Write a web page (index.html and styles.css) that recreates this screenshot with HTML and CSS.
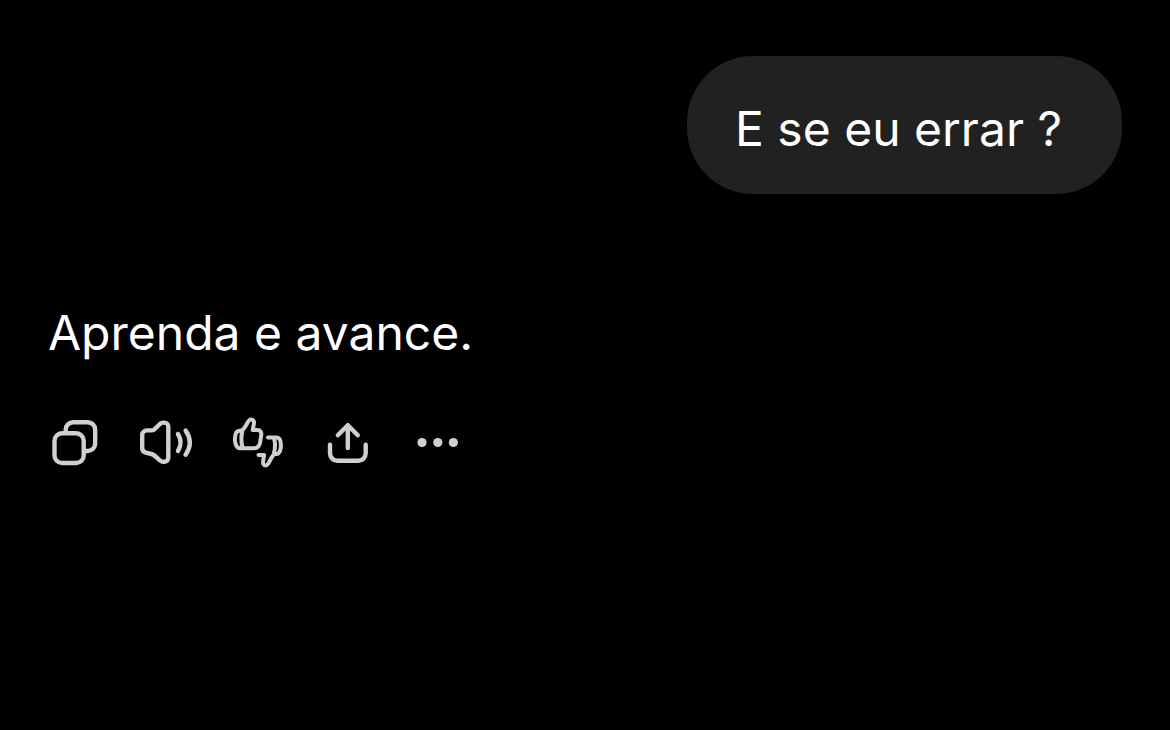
FILE: index.html
```html
<!DOCTYPE html>
<html lang="pt-BR">
<head>
<meta charset="utf-8">
<meta name="viewport" content="width=device-width, initial-scale=1">
<title>Conversa</title>
<link rel="stylesheet" href="styles.css">
</head>
<body>
<main class="chat">
  <p class="bubble">E se eu errar ?</p>
  <article class="reply">
    <p class="reply-text">Aprenda e avance.</p>
    <div class="actions">
      <button class="action" type="button" aria-label="Copiar">
        <svg class="icon" viewBox="0 0 70 70"><rect x="14.5" y="28.3" width="29.2" height="29.7" rx="7.5"/><path d="M25.7 27v-2.3a7.5 7.5 0 0 1 7.5-7.5h14.5a7.5 7.5 0 0 1 7.5 7.5v13.8a7.5 7.5 0 0 1-7.5 7.5h-2.5"/></svg>
      </button>
      <button class="action" type="button" aria-label="Ouvir">
        <svg class="icon" viewBox="0 0 70 70"><path d="M11.2 30.2a4.8 4.8 0 0 1 4.8-4.8h4.5q1.8 0 3-1.2l5.4-5.2c1.1-1 2.3-1.4 3.3-1.4h1.1a4 4 0 0 1 4 4v31.2a4 4 0 0 1-4 4h-.8c-1.4 0-2.5-.5-3.6-1.4l-5.5-4.9q-1.3-1.1-3-1.5l-5.6-1.4A4.7 4.7 0 0 1 11.2 43z"/><path d="M47 29c3.3 5.5 3.3 11.5 0 17M54.6 25.5c5.6 8 5.6 16.2 0 24.2"/></svg>
      </button>
      <button class="action" type="button" aria-label="Avaliar">
        <svg class="icon icon-fine" viewBox="0 0 70 70"><path d="M18.5 25.6c3 0 4.9-4.1 6.8-7.6 1.1-2.2 1.9-3.6 3.5-3.6 2.9 0 3.5 2.1 3.1 4.2L30.7 25h4.4c3.5 0 4.7 2.4 4.1 5.5l-1.1 7c-.7 4-2.6 5.7-6.2 5.7H17.8c-3.1 0-4.9-4.4-4.9-9.2 0-4.8 1.8-8.4 5.6-8.4zM20.3 26c-1.3 5.6-1.3 11 .2 16.5"/><path d="M46 32.5h8.7c2.8 0 4.2 3.5 4.2 8 0 4.6-1.5 8.4-4.2 8.4h-1.3c-1.9 0-2.7 1.6-4 4l-2.2 4.1c-.8 1.5-1.8 3.5-3.5 3.5-2.3 0-2.9-2.3-2.6-4.1l1-6.5H36.5M52 33.2c1.4 4.7 1.4 9.6 0 14.7"/></svg>
      </button>
      <button class="action" type="button" aria-label="Compartilhar">
        <svg class="icon" viewBox="0 0 70 70"><path d="M34.8 43V20.5M24.8 30.2l10-10 10 10M17 39.8v8.5a7.5 7.5 0 0 0 7.5 7.5h20.7a7.5 7.5 0 0 0 7.5-7.5v-8.5"/></svg>
      </button>
      <button class="action" type="button" aria-label="Mais opções">
        <svg class="icon icon-dots" viewBox="0 0 70 70"><circle cx="18" cy="37.5" r="4.6"/><circle cx="33.8" cy="37.5" r="4.6"/><circle cx="49.4" cy="37.5" r="4.6"/></svg>
      </button>
    </div>
  </article>
</main>
</body>
</html>
```
FILE: styles.css
```css
* { box-sizing: border-box; }
body {
  margin: 0;
  background: #000;
  color: #fff;
  font-family: Inter, "Liberation Sans", sans-serif;
  font-size: 48px;
  line-height: 66px;
}
.chat {
  display: flex;
  flex-direction: column;
  gap: 106px;
  padding: 56px 48px;
}
.bubble {
  align-self: flex-end;
  margin: 0;
  padding: 40px 60px 32px 48px;
  border-radius: 66px;
  background: #212121;
}
.reply-text { margin: 0; }
.actions {
  display: flex;
  gap: 20px;
  margin: 39px 0 0 -8px;
}
.action {
  width: 71px;
  height: 70px;
  padding: 0;
  border: 0;
  background: none;
  color: #d0d0d0;
  cursor: pointer;
}
.icon {
  display: block;
  width: 70px;
  height: 70px;
  fill: none;
  stroke: currentColor;
  stroke-width: 4.4;
  stroke-linecap: round;
  stroke-linejoin: round;
}
.icon-fine { stroke-width: 4; }
.icon-dots { fill: currentColor; stroke: none; }
```
